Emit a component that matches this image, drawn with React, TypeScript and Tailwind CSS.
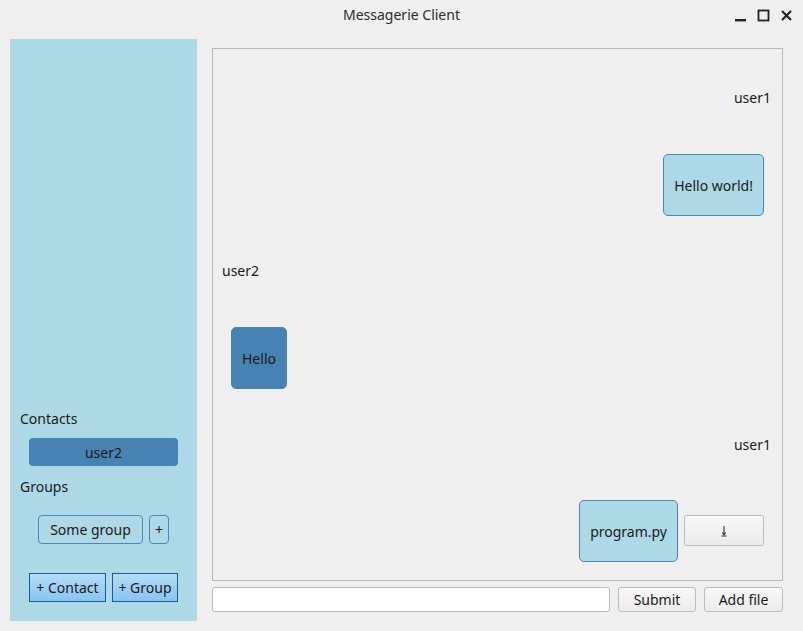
import React from 'react';

const font = { fontFamily: '"Noto Sans", "Open Sans", sans-serif' };

function Bubble({ text, dark }: { text: string; dark?: boolean }) {
  return (
    <div
      className={`h-[62px] px-[10px] flex items-center rounded-[5px] text-[14px] text-[#1a1a1a] ${
        dark ? 'bg-[#4682b4] border border-[#4682b4]' : 'bg-[#add8e6] border border-[#4f86b8]'
      }`}
    >
      {text}
    </div>
  );
}

function Label({ text, right }: { text: string; right?: boolean }) {
  return <div className={`h-[20px] leading-[20px] text-[14px] text-[#1a1a1a] ${right ? 'text-right pr-[11px]' : 'pl-[9px]'}`}>{text}</div>;
}

function DownloadGlyph() {
  return (
    <svg width="8" height="12" viewBox="0 0 8 12" className="text-[#333]">
      <path d="M4 1 V9.5 M2.3 7.6 L4 9.6 L5.7 7.6 M1.5 11 H6.5" stroke="currentColor" strokeWidth="1.1" fill="none" />
    </svg>
  );
}

const qtButton =
  'h-[25px] rounded-[3px] border border-[#bcbcbc] bg-gradient-to-b from-[#f8f8f8] to-[#ebebeb] text-[14px] text-[#1a1a1a] flex items-center justify-center';

export default function App() {
  return (
    <div className="w-[803px] h-[631px] bg-[#efefef] flex flex-col overflow-hidden" style={font}>
      {/* title bar */}
      <div className="h-[39px] relative flex items-start justify-center pt-[5px]">
        <span className="text-[14px] text-[#2c2c2c] leading-[20px]">Messagerie Client</span>
        <div className="absolute right-[10px] top-[9px] flex items-center gap-[10px]">
          <svg width="13" height="13" viewBox="0 0 13 13">
            <rect x="1" y="10" width="11" height="2.4" fill="#222" />
          </svg>
          <svg width="13" height="13" viewBox="0 0 13 13">
            <rect x="1.5" y="1.5" width="10" height="10" stroke="#222" strokeWidth="1.8" fill="none" />
          </svg>
          <svg width="13" height="13" viewBox="0 0 13 13">
            <path d="M2 2 L11 11 M11 2 L2 11" stroke="#222" strokeWidth="2.2" />
          </svg>
        </div>
      </div>

      <div className="flex-1 flex pl-[10px] pr-[20px] pb-[10px] gap-[15px] min-h-0">
        {/* sidebar */}
        <aside className="w-[187px] bg-[#add8e6] flex flex-col justify-end pb-[19px] text-[14px] text-[#1a1a1a]">
          <div className="pl-[10px] h-[20px] leading-[20px]">Contacts</div>
          <div className="mx-[19px] mt-[9px] h-[28px] rounded-[4px] bg-[#4682b4] flex items-center justify-center">user2</div>
          <div className="pl-[10px] mt-[11px] h-[20px] leading-[20px]">Groups</div>
          <div className="mt-[18px] flex justify-center gap-[6px]">
            <div className="w-[105px] h-[29px] rounded-[4px] border border-[#4f86b8] flex items-center justify-center">Some group</div>
            <div className="w-[20px] h-[29px] rounded-[4px] border border-[#4f86b8] flex items-center justify-center">+</div>
          </div>
          <div className="mt-[29px] flex justify-center gap-[6px]">
            <div className="w-[77px] h-[29px] border border-[#1f5a93] bg-gradient-to-b from-[#b3dcf6] to-[#86c5f4] flex items-center justify-center">+ Contact</div>
            <div className="w-[66px] h-[29px] border border-[#1f5a93] bg-gradient-to-b from-[#b3dcf6] to-[#86c5f4] flex items-center justify-center">+ Group</div>
          </div>
        </aside>

        {/* chat */}
        <div className="flex-1 flex flex-col pt-[9px] pb-[9px] gap-[6px] min-w-0">
          <div className="flex-1 border border-[#b9b9b9] flex flex-col pt-[39px]">
            <Label text="user1" right />
            <div className="mt-[46px] flex justify-end pr-[18px]">
              <Bubble text="Hello world!" />
            </div>
            <div className="mt-[45px]">
              <Label text="user2" />
            </div>
            <div className="mt-[46px] pl-[18px] flex">
              <Bubble text="Hello" dark />
            </div>
            <div className="mt-[46px]">
              <Label text="user1" right />
            </div>
            <div className="mt-[45px] flex justify-end items-center pr-[18px] gap-[6px]">
              <Bubble text="program.py" />
              <div className={`${qtButton} w-[80px] h-[31px] mb-[1px]`}>
                <DownloadGlyph />
              </div>
            </div>
          </div>
          <div className="h-[25px] flex gap-[8px]">
            <div className="flex-1 h-[25px] bg-white border border-[#bcbcbc] rounded-[3px]" />
            <div className={`${qtButton} w-[78px]`}>Submit</div>
            <div className={`${qtButton} w-[79px]`}>Add file</div>
          </div>
        </div>
      </div>
    </div>
  );
}
